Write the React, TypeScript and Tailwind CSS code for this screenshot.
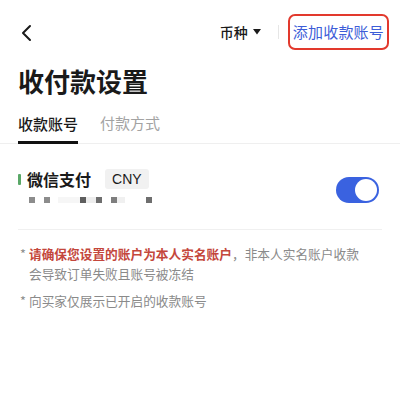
import React from "react";

export default function App() {
  const font = { fontFamily: '"Noto Sans CJK SC", "Noto Sans", sans-serif' };
  return (
    <div className="w-[400px] h-[396px] bg-white overflow-hidden text-[#1a1a1a]" style={font}>
      {/* header */}
      <div className="h-[64px] flex items-center pl-[20px] pr-[11px]">
        <svg width="12" height="18" viewBox="0 0 12 18" className="mt-[2px]">
          <path d="M10 2 L3 9 L10 16" fill="none" stroke="#1a1a1a" strokeWidth="2" strokeLinecap="round" strokeLinejoin="round" />
        </svg>
        <div className="flex-1" />
        <div className="flex items-center gap-[5px] text-[14px] font-medium leading-[20px]">
          <span>币种</span>
          <svg width="8" height="6" viewBox="0 0 8 6">
            <path d="M0 0 L8 0 L4 5.5 Z" fill="#1a1a1a" />
          </svg>
        </div>
        <div className="w-px h-[14px] bg-[#e6e6e6] ml-[17px] mr-[9px]" />
        <div className="h-[36px] px-[3px] flex items-center border-2 border-[#e2392d] rounded-[7px] text-[15px] text-[#3d5dd8] leading-[20px] tracking-[0.2px]">
          添加收款账号
        </div>
      </div>

      {/* title */}
      <div className="pl-[18px] text-[26px] font-bold leading-[34px]">收付款设置</div>

      {/* tabs */}
      <div className="mt-[14px] flex items-end px-[18px] gap-[22px] border-b border-[#efefef]">
        <div className="pb-[6px] border-b-[3px] border-[#111] text-[15px] font-medium leading-[22px] mb-[-1px]">收款账号</div>
        <div className="pb-[9px] text-[15px] text-[#a3a3a3] leading-[22px]">付款方式</div>
      </div>

      {/* account row */}
      <div className="mx-[18px] pt-[24px] pb-[26px] border-b border-[#f0f0f0] flex items-start">
        <div className="flex-1">
          <div className="flex items-center h-[22px]">
            <div className="w-[3px] h-[11px] bg-[#5aa868] rounded-[1px]" />
            <span className="ml-[6px] text-[16px] font-semibold leading-[22px]">微信支付</span>
            <span className="ml-[14px] px-[7px] h-[20px] flex items-center bg-[#f1f1f1] rounded-[3px] text-[14px] leading-[20px]" style={{ fontFamily: '"Liberation Sans", "Noto Sans", sans-serif' }}>CNY</span>
          </div>
          <div className="mt-[7px] h-[6px] flex items-center">
            <div className="ml-[11px] w-[6px] h-[6px] bg-[#8c8c8c]" />
            <div className="ml-[9px] w-[6px] h-[6px] bg-[#8c8c8c]" />
            <div className="ml-[8px] w-[22px] h-[6px] bg-[#f6f6f6]" />
            <div className="w-[6px] h-[6px] bg-[#5e5e5e]" />
            <div className="w-[10px] h-[6px] bg-[#ededed]" />
            <div className="w-[6px] h-[6px] bg-[#6e6e6e]" />
            <div className="ml-[9px] w-[6px] h-[6px] bg-[#7e7e7e]" />
            <div className="w-[8px] h-[6px] bg-[#f0f0f0]" />
            <div className="ml-[21px] w-[6px] h-[6px] bg-[#6e6e6e]" />
          </div>
        </div>
        <div className="mt-[9px] w-[43px] h-[26px] rounded-full bg-[#3a62e0] relative mr-[3px]">
          <div className="absolute right-[2px] top-[2px] w-[22px] h-[22px] rounded-full bg-white" />
        </div>
      </div>

      {/* notes */}
      <div className="px-[20px] pt-[14px] text-[12.7px] leading-[20px] text-[#8a8a8a]">
        <div className="flex">
          <span className="w-[9px] shrink-0">*</span>
          <div>
            <span className="text-[#c4473c] font-bold">请确保您设置的账户为本人实名账户</span>
            <span>，非本人实名账户收款</span>
            <br />
            <span>会导致订单失败且账号被冻结</span>
          </div>
        </div>
        <div className="flex mt-[7px]">
          <span className="w-[9px] shrink-0">*</span>
          <span>向买家仅展示已开启的收款账号</span>
        </div>
      </div>
    </div>
  );
}
